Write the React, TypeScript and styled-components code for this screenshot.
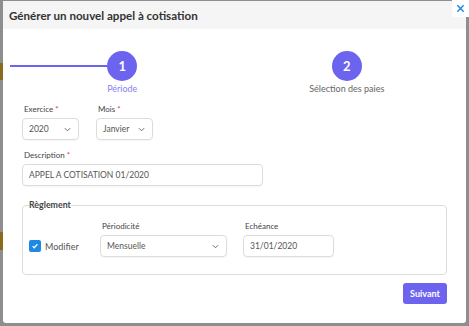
import styled, {createGlobalStyle} from "styled-components";

const GlobalStyle = createGlobalStyle`
    html, body {
        margin: 0;
        padding: 0;
    }
    body {
        width: 469px;
        height: 326px;
        overflow: hidden;
        font-family: Lato, "Open Sans", sans-serif;
        background-color: #8e8e8e;
        background-image: linear-gradient(to bottom,
            #8e8e8e 0 63px, #8a6a1e 63px 80px, #8e8e8e 80px 232px,
            #8a6a1e 232px 250px, #8e8e8e 250px);
        background-size: 3px 100%;
        background-repeat: no-repeat;
    }
`;

const ACCENT = "#6c63ef";

const Backdrop = styled.div`
    position: relative;
    width: 469px;
    height: 326px;
    padding: 1px 0 0 3px;
    box-sizing: border-box;
`;

const Modal = styled.div`
    width: 463px;
    height: 322px;
    background: #fff;
    border-radius: 0 0 3px 3px;
    display: flex;
    flex-direction: column;
`;

const Header = styled.div`
    height: 28px;
    background: #f5f5f5;
    display: flex;
    align-items: center;
    padding-left: 6px;
    font-size: 11.6px;
    font-weight: 700;
    color: #333;
`;

const CloseButton = styled.div`
    position: absolute;
    top: 0;
    right: 0;
    width: 17px;
    height: 17px;
    background: #fff;
    border-radius: 0 0 0 3px;
    display: flex;
    align-items: center;
    justify-content: center;
`;

const Stepper = styled.div`
    display: grid;
    grid-template-columns: 1fr 1fr;
    padding: 22px 7px 0 7px;
`;

const Step = styled.div`
    display: flex;
    flex-direction: column;
    align-items: center;
`;

const StepTrack = styled.div`
    width: 100%;
    display: flex;
    align-items: center;
`;

const Line = styled.div<{ $visible: boolean }>`
    flex: 1;
    height: 2px;
    background: ${p => (p.$visible ? ACCENT : "transparent")};
`;

const Circle = styled.div`
    width: 30px;
    height: 30px;
    border-radius: 50%;
    background: ${ACCENT};
    color: #fff;
    font-size: 13px;
    font-weight: 700;
    display: flex;
    align-items: center;
    justify-content: center;
`;

const StepLabel = styled.div<{ $active: boolean }>`
    margin-top: 2px;
    font-size: 9px;
    line-height: 12px;
    color: ${p => (p.$active ? "#8a82f4" : "#666")};
`;

const Body = styled.div`
    padding: 9px 19px 0 19px;
    display: flex;
    flex-direction: column;
`;

const Row = styled.div<{ $gap?: string; $top?: string }>`
    display: flex;
    align-items: flex-end;
    gap: ${p => p.$gap || "17px"};
    margin-top: ${p => p.$top || "0"};
`;

const Field = styled.div<{ $width: string; $left?: string }>`
    display: flex;
    flex-direction: column;
    width: ${p => p.$width};
    margin-left: ${p => p.$left || "0"};
`;

const Label = styled.span`
    font-size: 8px;
    color: #444;
    margin-left: 2px;
    margin-bottom: 3px;
    line-height: 11px;
`;

const Required = styled.span`
    color: #e53935;
`;

const Box = styled.div`
    height: 22px;
    border: 1px solid #dcdcdc;
    border-radius: 4px;
    display: flex;
    align-items: center;
    justify-content: space-between;
    padding: 0 7px 0 6px;
    font-size: 8.5px;
    color: #555;
    box-sizing: border-box;
    box-shadow: 0 1px 1px rgba(0, 0, 0, 0.04);
`;

const Fieldset = styled.fieldset`
    margin: 14px 0 0 0;
    padding: 11px 6px 17px 6px;
    border: 1px solid #dcdcdc;
    border-radius: 4px;
    width: 425px;
    box-sizing: border-box;
`;

const Legend = styled.legend`
    font-size: 8.8px;
    font-weight: 700;
    color: #444;
    padding: 0;
    margin-left: 0;
    line-height: 10px;
`;

const CheckWrap = styled.div`
    display: flex;
    align-items: center;
    gap: 4px;
    height: 22px;
    width: 65px;
    font-size: 9px;
    color: #555;
`;

const CheckBox = styled.div`
    width: 12px;
    height: 12px;
    border-radius: 2px;
    background: #1e88e5;
    display: flex;
    align-items: center;
    justify-content: center;
`;

const Footer = styled.div`
    display: flex;
    justify-content: flex-end;
    padding: 8px 19px 0 19px;
`;

const Button = styled.button`
    width: 44px;
    height: 21px;
    border: none;
    border-radius: 3px;
    background: ${ACCENT};
    color: #fff;
    font-family: inherit;
    font-size: 9px;
    font-weight: 700;
    padding: 0;
`;

const Chevron = () => (
    <svg width="7" height="5" viewBox="0 0 8 5">
        <path d="M1 1l3 3 3-3" fill="none" stroke="#666" strokeWidth="1.1"/>
    </svg>
);

const steps = [
    {num: 1, label: "Période", active: true},
    {num: 2, label: "Sélection des paies", active: false},
];

export default function App() {
    return (
        <>
            <GlobalStyle/>
            <Backdrop>
                <Modal>
                    <Header>Générer un nouvel appel à cotisation</Header>
                    <Stepper>
                        {steps.map(step => (
                            <Step key={step.num}>
                                <StepTrack>
                                    <Line $visible={step.active}/>
                                    <Circle>{step.num}</Circle>
                                    <Line $visible={false}/>
                                </StepTrack>
                                <StepLabel $active={step.active}>{step.label}</StepLabel>
                            </Step>
                        ))}
                    </Stepper>
                    <Body>
                        <Row>
                            <Field $width="57px">
                                <Label>Exercice <Required>*</Required></Label>
                                <Box>2020<Chevron/></Box>
                            </Field>
                            <Field $width="57px">
                                <Label>Mois <Required>*</Required></Label>
                                <Box>Janvier<Chevron/></Box>
                            </Field>
                        </Row>
                        <Row $top="10px">
                            <Field $width="241px">
                                <Label>Description <Required>*</Required></Label>
                                <Box>APPEL A COTISATION 01/2020</Box>
                            </Field>
                        </Row>
                        <Fieldset>
                            <Legend>Règlement</Legend>
                            <Row $gap="6px">
                                <CheckWrap>
                                    <CheckBox>
                                        <svg width="8" height="8" viewBox="0 0 10 10">
                                            <path d="M2 5.2l2 2 4-4.4" fill="none" stroke="#fff" strokeWidth="1.5"/>
                                        </svg>
                                    </CheckBox>
                                    Modifier
                                </CheckWrap>
                                <Field $width="127px">
                                    <Label>Périodicité</Label>
                                    <Box>Mensuelle<Chevron/></Box>
                                </Field>
                                <Field $width="91px" $left="10px">
                                    <Label>Echéance</Label>
                                    <Box>31/01/2020</Box>
                                </Field>
                            </Row>
                        </Fieldset>
                    </Body>
                    <Footer>
                        <Button>Suivant</Button>
                    </Footer>
                </Modal>
                <CloseButton>
                    <svg width="9" height="9" viewBox="0 0 10 10">
                        <path d="M1.5 1.5l7 7M8.5 1.5l-7 7" stroke="#1e88e5" strokeWidth="1.6"/>
                    </svg>
                </CloseButton>
            </Backdrop>
        </>
    );
}
